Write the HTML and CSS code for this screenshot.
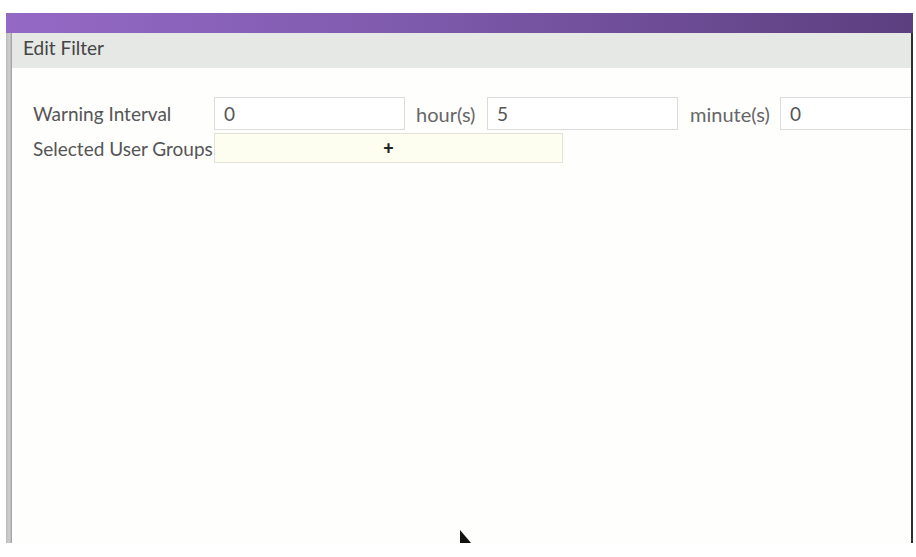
FILE: index.html
```html
<!DOCTYPE html>
<html>
<head>
<meta charset="utf-8">
<link rel="stylesheet" href="styles.css">
</head>
<body>
<div class="window">
  <div class="titlebar"></div>
  <div class="main">
    <div class="strip"></div>
    <div class="dialog">
      <div class="header">Edit Filter</div>
      <div class="form">
        <div class="row">
          <span class="label">Warning Interval</span>
          <span class="input w1">0</span>
          <span class="unit u1">hour(s)</span>
          <span class="input w1">5</span>
          <span class="unit u2">minute(s)</span>
          <span class="input w2">0</span>
        </div>
        <div class="row">
          <span class="label">Selected User Groups</span>
          <span class="groups">+</span>
        </div>
      </div>
    </div>
  </div>
  <svg class="cursor" width="20" height="20" viewBox="0 0 20 20"><path d="M1 0 L1 20 L18 20 Z" fill="#111"/></svg>
</div>
</body>
</html>
```

FILE: styles.css
```css
html, body {
  margin: 0;
  padding: 0;
  background: #ffffff;
}
body {
  padding: 13px 0 0 6px;
  font-family: Lato, "Open Sans", sans-serif;
  color: #555;
}
.window {
  position: relative;
  width: 907px;
  height: 530px;
  display: flex;
  flex-direction: column;
  overflow: hidden;
}
.titlebar {
  height: 20px;
  flex: none;
  background: linear-gradient(to right, #9469c6 0%, #7e5aac 45%, #5c3f7f 100%);
}
.main {
  flex: 1;
  display: flex;
  min-height: 0;
}
.strip {
  width: 6px;
  flex: none;
  background: linear-gradient(to right, #bdbdbd, #cfcfcf 60%, #9c9c9c);
}
.dialog {
  flex: 1;
  min-width: 0;
  background: #fefefd;
  border-right: 2px solid #2e2e2e;
  overflow: hidden;
}
.header {
  height: 35px;
  box-sizing: border-box;
  background: #e6e8e5;
  padding: 3px 0 0 11px;
  font-size: 19px;
  line-height: 23px;
  color: #444;
}
.form {
  padding: 29px 0 0 21px;
  display: flex;
  flex-direction: column;
  gap: 3px;
}
.row {
  display: flex;
  align-items: center;
  white-space: nowrap;
}
.label {
  width: 181px;
  flex: none;
  font-size: 19px;
  color: #555;
}
.input {
  height: 33px;
  box-sizing: border-box;
  border: 1px solid #dcdcdc;
  background: #fff;
  display: flex;
  align-items: center;
  padding-left: 9px;
  font-size: 19px;
  color: #555;
  flex: none;
}
.w1 { width: 191px; }
.w2 { width: 200px; }
.unit {
  font-size: 20px;
  color: #666;
  padding-left: 11px;
  box-sizing: border-box;
  flex: none;
}
.u1 { width: 82px; }
.u2 { width: 102px; padding-left: 12px; }
.groups {
  width: 349px;
  height: 30px;
  box-sizing: border-box;
  border: 1px solid #e2e2da;
  background: #fdfdf0;
  display: flex;
  align-items: center;
  justify-content: center;
  font-size: 18px;
  font-weight: 900;
  color: #222;
  flex: none;
}
.cursor {
  position: absolute;
  left: 453px;
  top: 517px;
}
```
